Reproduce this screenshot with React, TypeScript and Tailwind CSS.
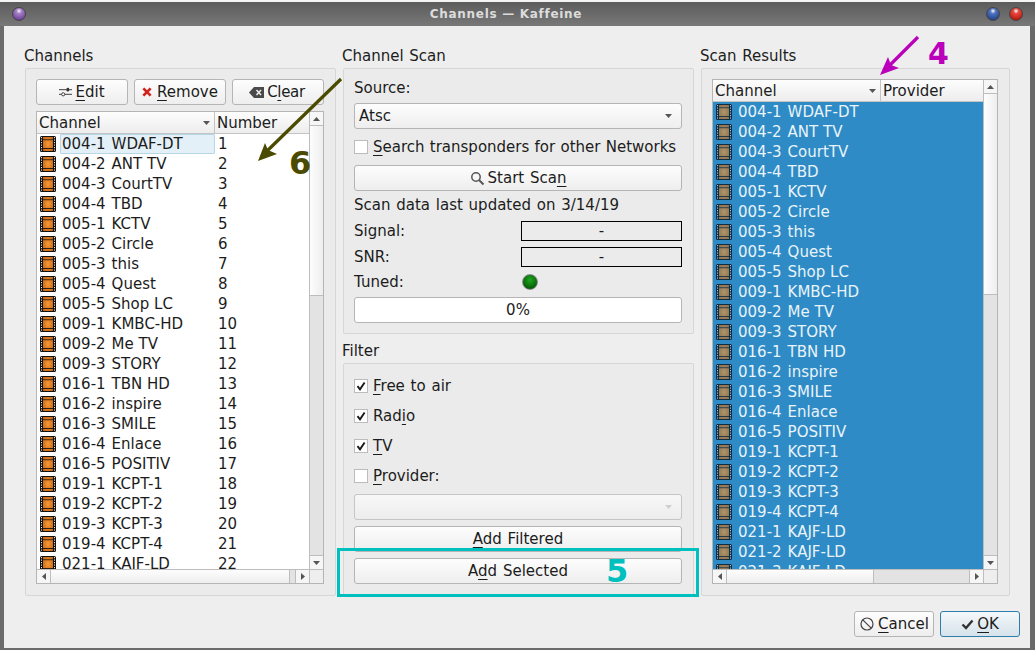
import React from "react";

const CHANNELS = [
  "004-1 WDAF-DT","004-2 ANT TV","004-3 CourtTV","004-4 TBD","005-1 KCTV","005-2 Circle","005-3 this","005-4 Quest","005-5 Shop LC",
  "009-1 KMBC-HD","009-2 Me TV","009-3 STORY","016-1 TBN HD","016-2 inspire","016-3 SMILE","016-4 Enlace","016-5 POSITIV",
  "019-1 KCPT-1","019-2 KCPT-2","019-3 KCPT-3","019-4 KCPT-4","021-1 KAJF-LD","021-2 KAJF-LD","021-3 KAJF-LD",
];

function ChannelName({ value }: { value: string }) {
  const cut = value.indexOf(" ");
  return (
    <>
      <span>{value.slice(0, cut)}</span>{" "}
      <span className="[word-spacing:0px]">{value.slice(cut + 1)}</span>
    </>
  );
}

function Film({ selected }: { selected?: boolean }) {
  const id = selected ? "filmS" : "filmN";
  const dark = selected ? "#0f2c48" : "#111111";
  const holes = selected ? "#9fc4de" : "#e8e8e8";
  return (
    <svg width="16" height="16" viewBox="0 0 16 16" className="shrink-0">
      <defs>
        <radialGradient id={id} cx="50%" cy="50%" r="70%">
          <stop offset="0%" stopColor={selected ? "#b0946a" : "#f59a38"} />
          <stop offset="100%" stopColor={selected ? "#8c7048" : "#c4600f"} />
        </radialGradient>
      </defs>
      <rect x="0" y="0" width="16" height="16" rx="1.5" fill={dark} />
      <rect x="3" y="1" width="10" height="14" fill={`url(#${id})`} />
      <rect x="3" y="3.2" width="10" height="1" fill={dark} opacity="0.75" />
      <rect x="3" y="12" width="10" height="1" fill={dark} opacity="0.85" />
      {[1, 3.5, 6, 8.5, 11, 13.5].map((y) => (
        <g key={y}>
          <rect x="1" y={y} width="1" height="1.2" fill={holes} />
          <rect x="14" y={y} width="1" height="1.2" fill={holes} />
        </g>
      ))}
    </svg>
  );
}

function Btn({ children, className = "" }: { children: React.ReactNode; className?: string }) {
  return (
    <div className={`h-[26px] flex items-center justify-center gap-[3px] rounded-[3px] border border-[#b5b5b5] bg-linear-to-b from-[#fdfdfd] to-[#eeeeee] text-[#1c1c1c] ${className}`}>
      {children}
    </div>
  );
}

function Combo({ label, disabled }: { label?: string; disabled?: boolean }) {
  return (
    <div className={`h-[26px] flex items-center justify-between pl-[4px] pr-[9px] rounded-[3px] border border-[#b5b5b5] bg-linear-to-b from-[#fdfdfd] to-[#eeeeee] ${disabled ? "opacity-70" : ""}`}>
      <span>{label}</span>
      <Tri dir="down" color={disabled ? "#c4c4c4" : "#555555"} />
    </div>
  );
}

function Tri({ dir, color = "#555555" }: { dir: "up" | "down" | "left" | "right"; color?: string }) {
  const pts = { up: "0,4 7,4 3.5,0", down: "0,0 7,0 3.5,4", left: "4,0 4,7 0,3.5", right: "0,0 0,7 4,3.5" }[dir];
  const w = dir === "up" || dir === "down" ? 7 : 4;
  const h = dir === "up" || dir === "down" ? 4 : 7;
  return (
    <svg width={w} height={h} viewBox={`0 0 ${w} ${h}`} className="shrink-0">
      <polygon points={pts} fill={color} />
    </svg>
  );
}

function Check({ checked, children }: { checked?: boolean; children: React.ReactNode }) {
  return (
    <div className="h-[20px] flex items-center gap-[5px]">
      <div className="w-[14px] h-[14px] shrink-0 border border-[#bcbcbc] bg-white flex items-center justify-center">
        {checked && (
          <svg width="10" height="10" viewBox="0 0 10 10">
            <path d="M1.5 5.2 L4 8.3 L8.6 1.5" fill="none" stroke="#1a1a1a" strokeWidth="1.9" />
          </svg>
        )}
      </div>
      <span>{children}</span>
    </div>
  );
}

function U({ children }: { children: React.ReactNode }) {
  return <span className="underline underline-offset-[3px] decoration-1">{children}</span>;
}

function ScrollBtn({ dir }: { dir: "up" | "down" | "left" | "right" }) {
  const cls = dir === "up" ? "h-[14px] border-b" : dir === "down" ? "h-[14px] border-t" : dir === "left" ? "w-[14px] border-r" : "w-[14px] border-l";
  return (
    <div className={`${cls} shrink-0 border-[#bdbdbd] bg-[#f6f6f6] flex items-center justify-center`}>
      <Tri dir={dir} />
    </div>
  );
}

function VScroll({ thumb }: { thumb: string }) {
  return (
    <div className="w-[14px] shrink-0 flex flex-col border-l border-[#bdbdbd] bg-[#e3e3e3]">
      <ScrollBtn dir="up" />
      <div className={`${thumb} shrink-0 border-b border-[#bdbdbd] bg-linear-to-r from-[#fdfdfd] to-[#eeeeee]`} />
      <div className="flex-1" />
      <ScrollBtn dir="down" />
    </div>
  );
}

function HScroll({ thumb }: { thumb: string }) {
  return (
    <div className="h-[14px] shrink-0 flex border-t border-[#bdbdbd] bg-[#e3e3e3]">
      <ScrollBtn dir="left" />
      <div className={`${thumb} shrink-0 border-r border-[#bdbdbd] bg-linear-to-b from-[#fdfdfd] to-[#eeeeee]`} />
      <div className="flex-1" />
      <ScrollBtn dir="right" />
      <div className="w-[14px] shrink-0 border-l border-[#bdbdbd] bg-[#eeeeee]" />
    </div>
  );
}

function HeaderCell({ children, className = "", sort }: { children: React.ReactNode; className?: string; sort?: boolean }) {
  return (
    <div className={`h-full flex items-center justify-between pl-[2px] pr-[4px] ${className}`}>
      <span>{children}</span>
      {sort && <Tri dir="down" />}
    </div>
  );
}

function Panel({ children, className = "" }: { children: React.ReactNode; className?: string }) {
  return <div className={`border border-[#d6d6d6] rounded-[2px] bg-[#ebebeb] ${className}`}>{children}</div>;
}

function Label({ children, className = "" }: { children: React.ReactNode; className?: string }) {
  return <div className={`h-[22px] -ml-px flex items-center pb-[2px] ${className}`}>{children}</div>;
}

function LeftTable() {
  return (
    <div className="mt-[6px] h-[473px] flex flex-col border border-[#b5b5b5] bg-white">
      <div className="flex-1 min-h-0 flex">
        <div className="flex-1 min-w-0 flex flex-col">
          <div className="h-[22px] shrink-0 flex border-b border-[#c4c4c4] bg-linear-to-b from-[#fdfdfd] to-[#ededed]">
            <HeaderCell sort className="w-[178px] border-r border-[#c4c4c4]">Channel</HeaderCell>
            <HeaderCell className="flex-1">Number</HeaderCell>
          </div>
          <div className="flex-1 min-h-0 overflow-hidden [word-spacing:2px]">
            {CHANNELS.slice(0, 22).map((c, i) => (
              <div key={c} className="h-[20px] flex items-center">
                <div className="w-[178px] shrink-0 flex items-center pl-[3px] gap-[4px]">
                  <Film />
                  <span className={`h-[20px] flex-1 flex items-center gap-[6px] pl-[2px] ${i === 0 ? "bg-[#e4f0f7] border border-[#b8d6e8] rounded-[1px] pl-px" : ""}`}><ChannelName value={c} /></span>
                </div>
                <span className="pl-[3px]">{i + 1}</span>
              </div>
            ))}
          </div>
        </div>
        <VScroll thumb="h-[170px]" />
      </div>
      <HScroll thumb="w-[239px]" />
    </div>
  );
}

function RightTable() {
  return (
    <div className="h-[505px] flex flex-col border border-[#b5b5b5] bg-white">
      <div className="flex-1 min-h-0 flex">
        <div className="flex-1 min-w-0 flex flex-col">
          <div className="h-[22px] shrink-0 flex border-b border-[#c4c4c4] bg-linear-to-b from-[#fdfdfd] to-[#ededed]">
            <HeaderCell sort className="w-[168px] border-r border-[#c4c4c4]">Channel</HeaderCell>
            <HeaderCell className="flex-1">Provider</HeaderCell>
          </div>
          <div className="flex-1 min-h-0 overflow-hidden bg-[#2e8bc6] text-[#e9f3f9] [word-spacing:2px]">
            {CHANNELS.map((c) => (
              <div key={c} className="h-[20px] flex items-center pl-[3px] gap-[6px]">
                <Film selected />
                <span className="flex items-center gap-[6px]"><ChannelName value={c} /></span>
              </div>
            ))}
          </div>
        </div>
        <VScroll thumb="h-[201px]" />
      </div>
      <HScroll thumb="w-[147px]" />
    </div>
  );
}

function Orb({ c1, c2 }: { c1: string; c2: string }) {
  return (
    <div
      className="w-[14px] h-[14px] rounded-full border border-[#444444]"
      style={{ background: `radial-gradient(circle at 50% 25%, #dddddd 0 6%, ${c1} 25%, ${c2} 85%)` }}
    />
  );
}

export default function App() {
  return (
    <div
      className="relative w-[1035px] h-[650px] overflow-hidden bg-[#6b6b6b] flex flex-col text-[15px] leading-[20px] text-[#1c1c1c] [word-spacing:1px]"
      style={{ fontFamily: '"DejaVu Sans", sans-serif' }}
    >
      <div className="h-[2px] shrink-0 bg-[#f4f4f4]" />
      <div className="h-[24px] shrink-0 flex items-center justify-between pl-[12px] pr-[12px] bg-linear-to-b from-[#5c5c5c] to-[#787878]">
        <Orb c1="#a47fc8" c2="#6a3f93" />
        <span className="font-bold text-[12px] text-[#dcdcdc] tracking-[0.7px] [word-spacing:0px]">Channels — Kaffeine</span>
        <div className="flex gap-[9px]">
          <Orb c1="#4f74c4" c2="#21407f" />
          <Orb c1="#e8483c" c2="#b5140e" />
        </div>
      </div>

      <div className="ml-[4px] mr-[5px] h-[622px] shrink-0 bg-[#eeeeee] pl-[21px] pr-[10px] pt-[20px] flex flex-col">
        <div className="flex h-[550px] shrink-0">
          <div className="w-[311px] shrink-0 flex flex-col">
            <Label>Channels</Label>
            <Panel className="flex-1 pl-[10px] pr-[11px] pt-[10px]">
              <div className="flex gap-[6px]">
                <Btn className="w-[92px] gap-[2px]">
                  <svg width="13" height="12" viewBox="0 0 14 12">
                    <path d="M0 3.5H8M11 3.5H14M0 8.5H3M6 8.5H14" stroke="#333" strokeWidth="1" />
                    <rect x="8" y="1.5" width="3" height="4" rx="1.5" fill="#333" />
                    <circle cx="4.5" cy="8.5" r="1.7" fill="#fff" stroke="#333" />
                  </svg>
                  <span><U>E</U>dit</span>
                </Btn>
                <Btn className="w-[92px] gap-[5px]">
                  <svg width="10" height="10" viewBox="0 0 11 11">
                    <path d="M1.5 1.5L9.5 9.5M9.5 1.5L1.5 9.5" stroke="#d0241c" strokeWidth="3" />
                  </svg>
                  <span><U>R</U>emove</span>
                </Btn>
                <Btn className="w-[92px] gap-[2px] pr-[2px]">
                  <svg width="15" height="11" viewBox="0 0 15 11">
                    <path d="M5 0H15V11H5L0 5.5Z" fill="#4a4a4a" />
                    <path d="M7.5 3L12 8M12 3L7.5 8" stroke="#eee" strokeWidth="1.5" />
                  </svg>
                  <span className="tracking-[-0.3px]">C<U>l</U>ear</span>
                </Btn>
              </div>
              <LeftTable />
            </Panel>
          </div>

          <div className="w-[351px] ml-[7px] shrink-0 flex flex-col">
            <Label>Channel Scan</Label>
            <Panel className="h-[266px] shrink-0 pl-[10px] pr-[11px] pt-[9px]">
              <div className="h-[20px] flex items-center">Source:</div>
              <div className="mt-[5px]"><Combo label="Atsc" /></div>
              <div className="mt-[8px] [word-spacing:0.5px]"><Check><U>S</U>earch transponders for other Networks</Check></div>
              <Btn className="mt-[8px]">
                <svg width="15" height="15" viewBox="0 0 15 15">
                  <circle cx="6" cy="6" r="4.2" fill="none" stroke="#555" strokeWidth="1.5" />
                  <path d="M9 9L13.5 13.5" stroke="#555" strokeWidth="2" />
                </svg>
                <span>Start Sca<U>n</U></span>
              </Btn>
              <div className="mt-[4px] h-[20px] flex items-center">Scan data last updated on 3/14/19</div>
              <div className="mt-[6px] flex items-center h-[20px]">
                <span className="w-[167px] shrink-0">Signal:</span>
                <div className="flex-1 h-[20px] border border-black flex items-center justify-center">-</div>
              </div>
              <div className="mt-[6px] flex items-center h-[20px]">
                <span className="w-[167px] shrink-0">SNR:</span>
                <div className="flex-1 h-[20px] border border-black flex items-center justify-center">-</div>
              </div>
              <div className="mt-[5px] flex items-center h-[20px]">
                <span className="w-[168px] shrink-0">Tuned:</span>
                <div
                  className="w-[16px] h-[16px] rounded-full border border-[#8a8a8a]"
                  style={{ background: "radial-gradient(circle at 50% 35%, #1fa51f, #045f04 75%)" }}
                />
              </div>
              <div className="mt-[5px] h-[26px] rounded-[3px] border border-[#b5b5b5] bg-white flex items-center justify-center">0%</div>
            </Panel>
            <Label className="mt-[7px]">Filter</Label>
            <Panel className="flex-1 pl-[10px] pr-[11px] pt-[12px]">
              <div className="flex flex-col gap-[10px]">
                <Check checked><U>F</U>ree to air</Check>
                <Check checked>Rad<U>i</U>o</Check>
                <Check checked><U>T</U>V</Check>
                <Check><U>P</U>rovider:</Check>
              </div>
              <div className="mt-[8px]"><Combo disabled /></div>
              <Btn className="mt-[6px]"><span><U>A</U>dd Filtered</span></Btn>
              <Btn className="mt-[6px]"><span>A<U>d</U>d Selected</span></Btn>
            </Panel>
          </div>

          <div className="w-[309px] ml-[7px] shrink-0 flex flex-col">
            <Label>Scan Results</Label>
            <Panel className="flex-1 pl-[10px] pr-[11px] pt-[10px]">
              <RightTable />
            </Panel>
          </div>
        </div>

        <div className="mt-[15px] flex justify-end gap-[6px]">
          <Btn className="w-[80px]">
            <svg width="16" height="16" viewBox="0 0 16 16">
              <circle cx="8" cy="8" r="6" fill="none" stroke="#444" strokeWidth="1.2" />
              <path d="M3.8 3.8L12.2 12.2" stroke="#444" strokeWidth="1.2" />
            </svg>
            <span><U>C</U>ancel</span>
          </Btn>
          <div className="w-[80px] h-[26px] flex items-center justify-center gap-[3px] rounded-[3px] border border-[#2e7dab] bg-linear-to-b from-[#f4f8fa] to-[#d6e2ea]">
            <svg width="13" height="11" viewBox="0 0 13 11">
              <path d="M1.5 5.5L5 9L11.5 1.5" fill="none" stroke="#333" strokeWidth="2.4" />
            </svg>
            <span><U>O</U>K</span>
          </div>
        </div>
      </div>

      {/* annotations laid over the screenshot */}
      <div className="absolute left-[337px] top-[548px] w-[362px] h-[49px] border-[3px] border-[#00bfbf]" />
      <svg className="absolute left-0 top-0 pointer-events-none" width="1035" height="650" viewBox="0 0 1035 650">
        <path d="M341 79L266 152" stroke="#4a4a00" strokeWidth="3.2" />
        <polygon points="258,161 265,143 268,150 277,154" fill="#4a4a00" />
        <path d="M918 37L888 67" stroke="#bb00bb" strokeWidth="3.2" />
        <polygon points="880,75 888,57 891,65 899,68" fill="#bb00bb" />
      </svg>
      <span className="absolute left-[289px] top-[143px] text-[32px] leading-[40px] font-bold text-[#4a4a00]">6</span>
      <span className="absolute left-[928px] top-[36px] text-[30px] leading-[36px] font-bold text-[#bb00bb]">4</span>
      <span className="absolute left-[606px] top-[551px] text-[32px] leading-[40px] font-bold text-[#00bfbf]">5</span>
    </div>
  );
}
